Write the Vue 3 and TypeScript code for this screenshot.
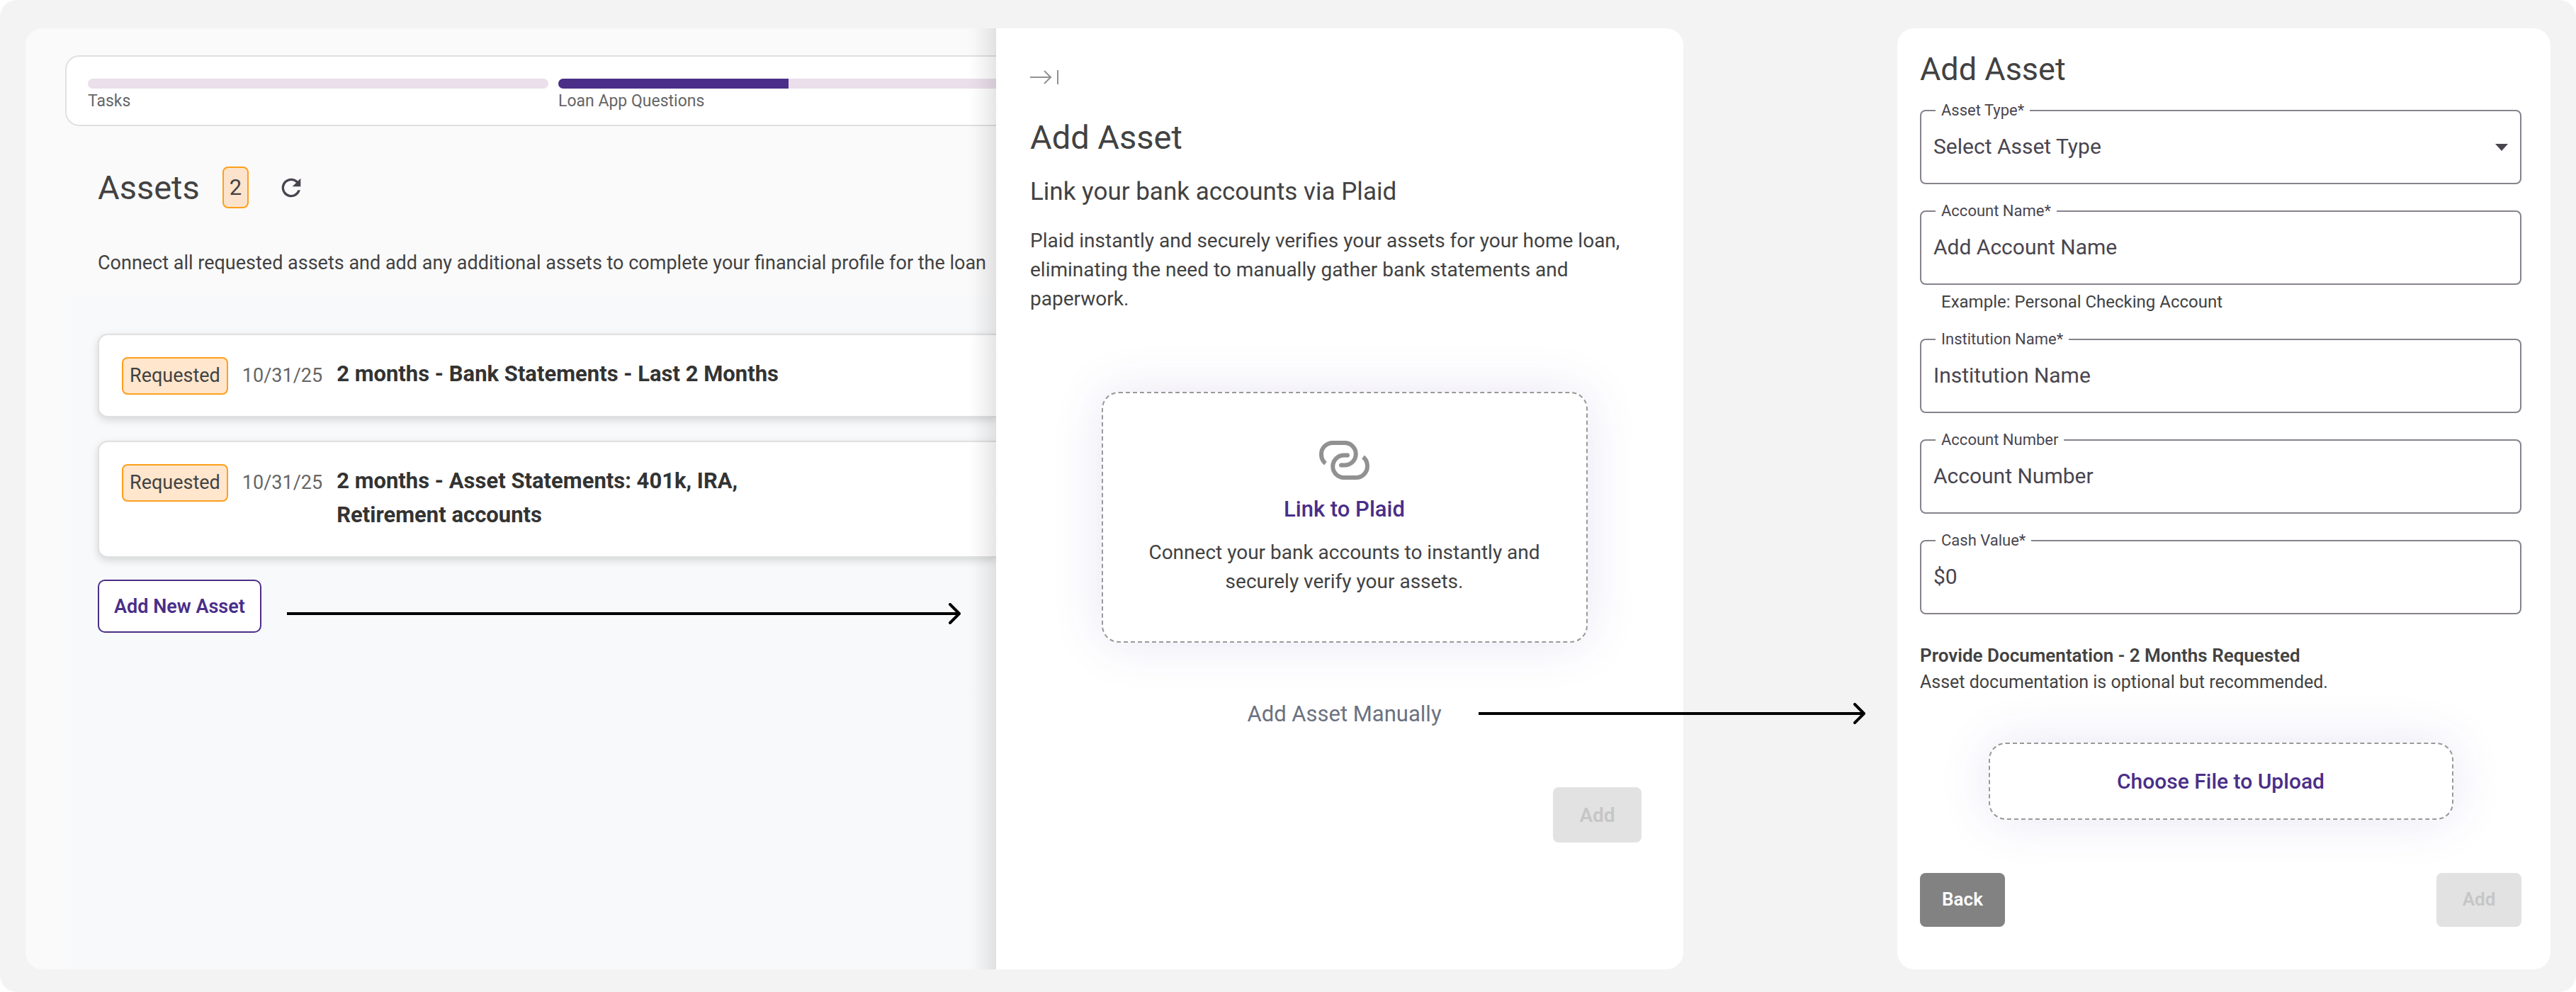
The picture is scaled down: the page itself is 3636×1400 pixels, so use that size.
<script setup lang="ts">
import { ref } from 'vue'

interface Step {
  label: string
  progress: number
}

interface AssetRequest {
  date: string
  title: string
}

interface TextField {
  id: string
  label: string
  placeholder: string
  hint?: string
}

const steps: Step[] = [
  { label: 'Tasks', progress: 0 },
  { label: 'Loan App Questions', progress: 50 },
]

const requests: AssetRequest[] = [
  { date: '10/31/25', title: '2 months - Bank Statements - Last 2 Months' },
  { date: '10/31/25', title: '2 months - Asset Statements: 401k, IRA, Retirement accounts' },
]

const fields: TextField[] = [
  {
    id: 'account-name',
    label: 'Account Name*',
    placeholder: 'Add Account Name',
    hint: 'Example: Personal Checking Account',
  },
  { id: 'institution', label: 'Institution Name*', placeholder: 'Institution Name' },
  { id: 'account-number', label: 'Account Number', placeholder: 'Account Number' },
  { id: 'cash-value', label: 'Cash Value*', placeholder: '$0' },
]

const assetType = ref('')
const values = ref<Record<string, string>>({})
</script>

<template>
  <main class="board">
    <section class="scene">
      <div class="assets">
        <div class="tracker">
          <div v-for="step in steps" :key="step.label" class="step">
            <div class="track">
              <div class="fill" :style="{ width: step.progress + '%' }"></div>
            </div>
            <span class="step-label">{{ step.label }}</span>
          </div>
        </div>

        <div class="assets-head">
          <div class="title-row">
            <h1 class="title">Assets</h1>
            <span class="count">{{ requests.length }}</span>
            <button class="icon-button" type="button" aria-label="Refresh">
              <svg class="refresh" viewBox="0 0 24 24" aria-hidden="true">
                <path
                  d="M17.65 6.35A7.96 7.96 0 0 0 12 4a8 8 0 1 0 7.73 10h-2.08A6 6 0 1 1 12 6c1.66 0 3.14.69 4.22 1.78L13 11h7V4z"
                />
              </svg>
            </button>
          </div>
          <p class="intro">
            Connect all requested assets and add any additional assets to complete your financial
            profile for the loan
          </p>
        </div>

        <div class="assets-body">
          <ul class="requests">
            <li v-for="item in requests" :key="item.title" class="request">
              <span class="pill">Requested</span>
              <span class="date">{{ item.date }}</span>
              <strong class="request-title">{{ item.title }}</strong>
            </li>
          </ul>
          <div class="add-row">
            <button class="outline-button" type="button">Add New Asset</button>
            <div class="arrow">
              <span class="arrow-line"></span>
              <svg class="arrow-head" viewBox="0 0 17 30" aria-hidden="true">
                <path d="M2 2 L15 15 L2 28" />
              </svg>
            </div>
          </div>
        </div>
      </div>

      <aside class="drawer">
        <button class="icon-button close" type="button" aria-label="Close panel">
          <svg class="collapse" viewBox="0 0 40 20" aria-hidden="true">
            <path d="M0 10 H30" />
            <path d="M20 1 L29 10 L20 19" />
            <path d="M39 0 V20" />
          </svg>
        </button>
        <h2 class="title drawer-title">Add Asset</h2>
        <h3 class="subtitle">Link your bank accounts via Plaid</h3>
        <p class="lead">
          Plaid instantly and securely verifies your assets for your home loan, eliminating the need
          to manually gather bank statements and paperwork.
        </p>

        <button class="dashed plaid" type="button">
          <svg class="link-icon" viewBox="0 0 71 55" aria-hidden="true">
            <path d="M9 32 C5 29 3 24.500 3 19 A16 16 0 0 1 19 3 H36 A15.750 15.750 0 0 1 36 34.500 H31" />
            <path d="M62 23 C66 26 68 30.500 68 36 A16 16 0 0 1 52 52 H35 A15.750 15.750 0 0 1 35 20.500 H40" />
            <circle cx="31" cy="34.500" r="3" />
            <circle cx="40" cy="20.500" r="3" />
          </svg>
          <span class="action-text">Link to Plaid</span>
          <span class="plaid-text">Connect your bank accounts to instantly and securely verify your assets.</span>
        </button>

        <div class="manual">
          <a class="manual-link" href="#add-asset">Add Asset Manually</a>
          <div class="arrow manual-arrow">
            <span class="arrow-line"></span>
            <svg class="arrow-head" viewBox="0 0 17 30" aria-hidden="true">
              <path d="M2 2 L15 15 L2 28" />
            </svg>
          </div>
        </div>

        <button class="solid drawer-add" type="button" disabled>Add</button>
      </aside>
    </section>

    <form id="add-asset" class="form" @submit.prevent>
      <h2 class="form-title">Add Asset</h2>
      <div class="fields">
        <div class="field">
          <label class="field-label" for="asset-type">Asset Type*</label>
          <select id="asset-type" v-model="assetType" class="control">
            <option value="">Select Asset Type</option>
          </select>
          <svg class="caret" viewBox="0 0 18 10" aria-hidden="true">
            <path d="M0 0 H18 L9 10 Z" />
          </svg>
        </div>
        <div v-for="field in fields" :key="field.id" class="field">
          <label class="field-label" :for="field.id">{{ field.label }}</label>
          <input
            :id="field.id"
            v-model="values[field.id]"
            class="control"
            type="text"
            :placeholder="field.placeholder"
          />
          <p v-if="field.hint" class="hint">{{ field.hint }}</p>
        </div>
      </div>

      <p class="doc-title">Provide Documentation - 2 Months Requested</p>
      <p class="doc-text">Asset documentation is optional but recommended.</p>

      <button class="dashed upload" type="button"><span class="upload-text">Choose File to Upload</span></button>

      <div class="actions">
        <button class="solid small back" type="button">Back</button>
        <button class="solid small" type="submit" disabled>Add</button>
      </div>
    </form>
  </main>
</template>

<style>
body {
  margin: 0;
  background: #ffffff;
}
</style>

<style scoped>
* {
  box-sizing: border-box;
}

h1,
h2,
h3,
p,
ul {
  margin: 0;
  padding: 0;
  font-weight: 400;
}

button,
input,
select {
  font-family: inherit;
  margin: 0;
}

button {
  cursor: pointer;
}

button:disabled {
  cursor: default;
}

.board {
  display: grid;
  grid-template-columns: minmax(0, 2340fr) minmax(0, 922fr);
  gap: 302px;
  min-height: 100vh;
  padding: 40px 36px 32px;
  border-radius: 24px;
  background: #f3f3f3;
  color: #424242;
  font-family: Roboto, 'Liberation Sans', sans-serif;
}

/* Assets page with its drawer */
.scene {
  display: grid;
  grid-template-columns: minmax(0, 1370fr) minmax(0, 970fr);
}

.assets {
  position: relative;
  display: flex;
  flex-direction: column;
  padding: 38px 0 0 56px;
  border-radius: 24px 0 0 24px;
  background: #fafafa;
  overflow: hidden;
}

/* Shade that the drawer casts on the page */
.assets::after {
  content: '';
  position: absolute;
  inset: 0 0 0 auto;
  width: 40px;
  background: linear-gradient(to left, rgba(0, 0, 0, 0.1), rgba(0, 0, 0, 0.05) 40%, rgba(0, 0, 0, 0.01) 80%, transparent);
}

.tracker {
  display: flex;
  gap: 14px;
  padding: 31px 0 19px 30px;
  border: 2px solid #e0e0e0;
  border-right: 0;
  border-radius: 20px 0 0 20px;
  background: #ffffff;
}

.step {
  display: flex;
  flex: 0 0 650px;
  flex-direction: column;
  gap: 4px;
}

.track {
  height: 14px;
  border-radius: 7px;
  background: #eadfeb;
  overflow: hidden;
}

.fill {
  height: 100%;
  background: #4a2e88;
}

.step-label {
  color: #666666;
  font-size: 23px;
  line-height: 28px;
}

.assets-head {
  padding: 57px 0 24px 46px;
}

.title-row {
  display: flex;
  align-items: center;
}

.title {
  font-size: 47px;
  line-height: 56px;
}

.count {
  margin-left: 32px;
  padding: 0 8px;
  border: 2px solid #ff9f1c;
  border-radius: 8px;
  background: #fde3cb;
  font-size: 31px;
  line-height: 55px;
}

.count + .icon-button {
  margin-left: 40px;
}

.icon-button {
  display: block;
  padding: 0;
  border: 0;
  background: none;
}

.refresh {
  display: block;
  width: 40px;
  height: 40px;
  fill: #49454f;
}

.intro {
  margin-top: 56px;
  font-size: 27px;
  line-height: 42px;
  white-space: nowrap;
}

.assets-body {
  flex: 1;
  padding: 55px 0 0 46px;
  background: #f8f9fb;
}

.requests {
  display: flex;
  flex-direction: column;
  gap: 33px;
  list-style: none;
}

.request {
  display: flex;
  align-items: flex-start;
  gap: 20px;
  padding: 31px 0 30px 32px;
  border: 2px solid #e0e0e0;
  border-right: 0;
  border-radius: 14px 0 0 14px;
  background: #ffffff;
  box-shadow: 0 4px 12px rgba(0, 0, 0, 0.14);
}

.pill {
  padding: 0 9px;
  border: 2px solid #ff9f1c;
  border-radius: 8px;
  background: #ffe6cc;
  font-size: 27px;
  line-height: 49px;
}

.date {
  color: #666666;
  font-size: 27px;
  line-height: 53px;
}

.request-title {
  max-width: 640px;
  padding-bottom: 4px;
  color: #333333;
  font-size: 31px;
  font-weight: 700;
  line-height: 48px;
}

.add-row {
  display: flex;
  align-items: flex-end;
  gap: 36px;
  margin-top: 31px;
  padding-right: 50px;
}

.outline-button {
  height: 75px;
  padding: 0 21px;
  border: 2px solid #4a2e88;
  border-radius: 10px;
  background: #ffffff;
  color: #4a2e88;
  font-size: 27px;
  font-weight: 600;
  white-space: nowrap;
}

/* Flow arrows */
.arrow {
  display: flex;
  flex: 1;
  align-items: center;
  margin-bottom: 12px;
}

.arrow-line {
  flex: 1;
  height: 4px;
  margin-right: -16px;
  background: #000000;
}

.arrow-head {
  width: 17px;
  height: 30px;
  fill: none;
  stroke: #000000;
  stroke-width: 4;
  stroke-linecap: round;
  stroke-linejoin: round;
}

/* Drawer */
.drawer {
  display: flex;
  flex-direction: column;
  align-items: flex-start;
  padding: 59px 35px 40px 48px;
  border-radius: 0 24px 24px 0;
  background: #ffffff;
}

.collapse {
  display: block;
  width: 40px;
  height: 20px;
  fill: none;
  stroke: #919191;
  stroke-width: 2;
}

.drawer-title {
  margin-top: 47px;
}

.subtitle {
  margin-top: 25px;
  font-size: 35px;
  line-height: 48px;
}

.lead {
  max-width: 850px;
  margin-top: 24px;
  font-size: 28px;
  line-height: 41px;
}

.dashed {
  border: 2px dashed #999999;
  border-radius: 24px;
  background: #ffffff;
  box-shadow: 0 0 72px rgba(74, 46, 160, 0.12);
  color: inherit;
}

.plaid {
  display: flex;
  flex-direction: column;
  align-items: center;
  align-self: center;
  width: 686px;
  max-width: 100%;
  margin-top: 111px;
  padding: 67px 56px 64px;
}

.link-icon {
  width: 71px;
  height: 55px;
  fill: none;
  stroke: #919191;
  stroke-width: 6;
}

.link-icon circle {
  fill: #919191;
  stroke: none;
}

.action-text {
  margin-top: 22px;
  color: #4a2e88;
  font-size: 31px;
  font-weight: 500;
  line-height: 40px;
}

.plaid-text {
  margin-top: 20px;
  font-size: 28px;
  line-height: 41px;
}

.manual {
  position: relative;
  align-self: center;
  margin-top: 81px;
}

.manual-link {
  display: block;
  color: #6b7280;
  font-size: 31px;
  line-height: 40px;
  text-decoration: none;
}

.manual-arrow {
  position: absolute;
  top: 4px;
  left: calc(100% + 52px);
  width: 546px;
  margin: 0;
}

.solid {
  min-width: 125px;
  height: 78px;
  padding: 0 30px;
  border: 0;
  border-radius: 8px;
  background: #e2e2e2;
  color: #c6c6c6;
  font-size: 28px;
  font-weight: 600;
}

.drawer-add {
  align-self: flex-end;
  margin: 83px 24px 0 0;
}

/* Manual entry form */
.form {
  padding: 30px 41px 40px 32px;
  border-radius: 24px;
  background: #ffffff;
}

.form-title {
  font-size: 45px;
  line-height: 56px;
}

.fields {
  display: flex;
  flex-direction: column;
  gap: 37px;
  margin-top: 29px;
}

.field {
  position: relative;
}

.field-label {
  position: absolute;
  top: -11px;
  left: 22px;
  padding: 0 8px;
  background: #ffffff;
  color: #49454f;
  font-size: 22px;
  line-height: 24px;
}

.control {
  display: block;
  width: 100%;
  height: 105px;
  padding: 0 17px 2px;
  border: 2px solid #87828c;
  border-radius: 8px;
  outline: 0;
  background: #ffffff;
  color: #49454f;
  font-size: 30px;
  appearance: none;
}

.control::placeholder {
  color: #49454f;
  opacity: 1;
}

.caret {
  position: absolute;
  top: 48px;
  right: 19px;
  width: 18px;
  height: 10px;
  fill: #49454f;
  pointer-events: none;
}

.hint {
  padding: 9px 0 0 30px;
  font-size: 24px;
  line-height: 30px;
}

.doc-title {
  margin-top: 39px;
  font-size: 26px;
  font-weight: 600;
  line-height: 38px;
}

.doc-text {
  font-size: 25px;
  line-height: 38px;
}

.upload {
  display: block;
  width: 656px;
  max-width: 100%;
  height: 109px;
  margin: 66px auto 0;
}

.upload-text {
  color: #4a2e88;
  font-size: 30px;
  font-weight: 500;
}

.actions {
  display: flex;
  justify-content: space-between;
  margin-top: 75px;
}

.small {
  min-width: 120px;
  height: 76px;
  padding-bottom: 2px;
  font-size: 26px;
}

.back {
  background: #828282;
  color: #ffffff;
}
</style>
